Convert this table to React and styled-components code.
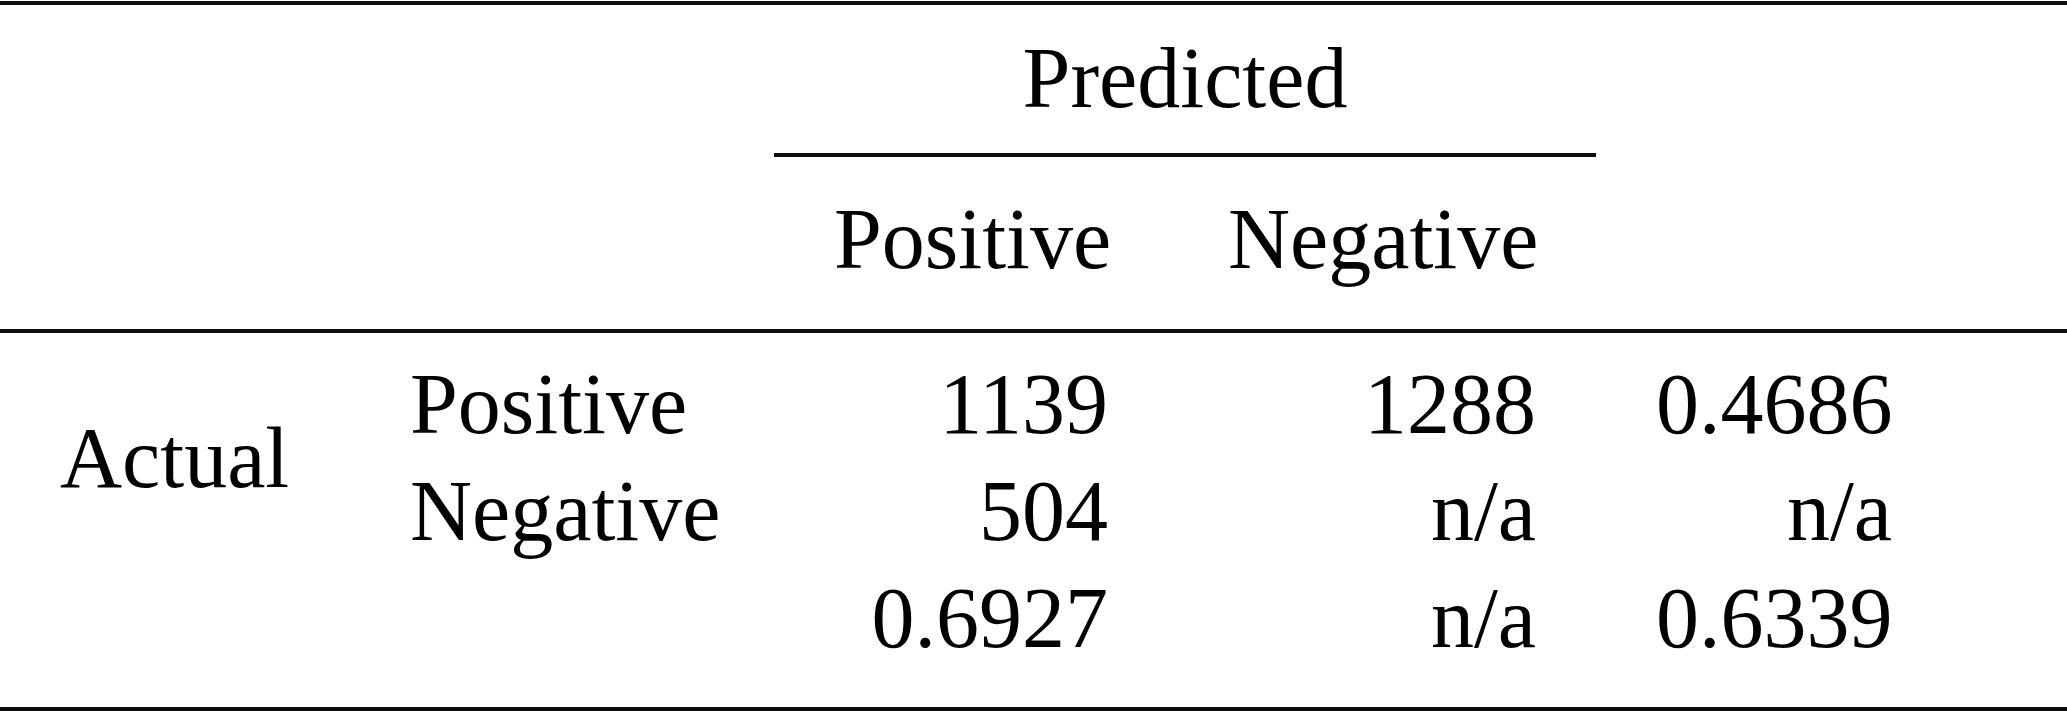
import { Fragment } from "react";
import styled, { createGlobalStyle } from "styled-components";

const GlobalStyle = createGlobalStyle`
  html, body {
    margin: 0;
    padding: 0;
    background: #fff;
  }
  body {
    font-family: "Liberation Serif", "Times New Roman", serif;
    color: #000;
  }
`;

const columns = "350px 424px 394px 428px 356px 1fr";

const Table = styled.div`
  width: 2067px;
  padding-top: 1px;
  font-size: 86px;
  line-height: 107px;
`;

const Rule = styled.div`
  height: 4px;
  background: #0d0d0d;
`;

const Head = styled.div`
  display: grid;
  grid-template-columns: ${columns};
  padding: 19.5px 0 35.5px;
`;

const Body = styled.div`
  display: grid;
  grid-template-columns: ${columns};
  grid-template-rows: repeat(3, 107px);
  padding: 18.5px 0 34.5px;
`;

const Cell = styled.div`
  white-space: nowrap;
  text-align: ${({ $align }) => $align || "left"};
  padding: 0 60px;
  grid-column: ${({ $col }) => $col || "auto"};
  grid-row: ${({ $row }) => $row || "auto"};
  align-self: ${({ $center }) => ($center ? "center" : "stretch")};
`;

const Spanner = styled(Cell)`
  grid-column: 3 / 5;
  text-align: center;
  padding-bottom: 21px;
`;

const CMidRule = styled.div`
  grid-column: 3 / 5;
  height: 4px;
  background: #0d0d0d;
  margin-bottom: 29.5px;
`;

const rows = [
  { label: "Positive", values: ["1139", "1288", "0.4686"] },
  { label: "Negative", values: ["504", "n/a", "n/a"] },
  { label: "", values: ["0.6927", "n/a", "0.6339"] },
];

export default function App() {
  return (
    <>
      <GlobalStyle />
      <Table>
        <Rule />
        <Head>
          <Spanner $row="1">Predicted</Spanner>
          <CMidRule />
          <Cell $col="3" $row="3" $align="center">Positive</Cell>
          <Cell $col="4" $row="3" $align="center">Negative</Cell>
        </Head>
        <Rule />
        <Body>
          <Cell $col="1" $row="1 / 3" $center>Actual</Cell>
          {rows.map((r, i) => (
            <Fragment key={i}>
              <Cell $col="2" $row={`${i + 1}`}>{r.label}</Cell>
              {r.values.map((v, j) => (
                <Cell key={j} $col={`${j + 3}`} $row={`${i + 1}`} $align="right">
                  {v}
                </Cell>
              ))}
            </Fragment>
          ))}
        </Body>
        <Rule />
      </Table>
    </>
  );
}
